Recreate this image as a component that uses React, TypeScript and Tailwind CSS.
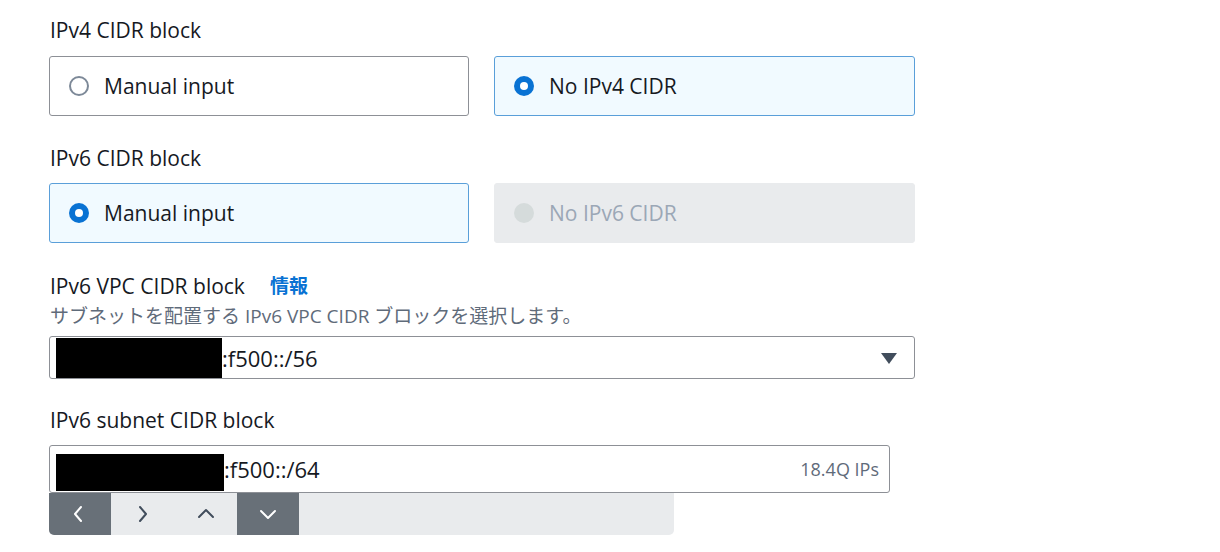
import React from 'react';

const font = { fontFamily: '"Open Sans", "Noto Sans CJK JP", sans-serif' };

const Radio = ({ state }: { state: 'off' | 'on' | 'disabled' }) => {
  if (state === 'on') {
    return (
      <span className="w-[20px] h-[20px] rounded-full bg-[#0972d3] flex items-center justify-center shrink-0">
        <span className="w-[8px] h-[8px] rounded-full bg-white"></span>
      </span>
    );
  }
  if (state === 'disabled') {
    return <span className="w-[20px] h-[20px] rounded-full bg-[#d5dbdb] shrink-0"></span>;
  }
  return <span className="w-[20px] h-[20px] rounded-full border-2 border-[#7d8998] bg-white shrink-0"></span>;
};

const Card = ({ label, state }: { label: string; state: 'off' | 'on' | 'disabled' }) => {
  const box =
    state === 'on'
      ? 'bg-[#f1faff] border-[#5a9fd9]'
      : state === 'disabled'
        ? 'bg-[#e9ebed] border-[#e9ebed]'
        : 'bg-white border-[#8d9096]';
  const text = state === 'disabled' ? 'text-[#9ba7b6]' : 'text-[#16191f]';
  return (
    <div className={`h-[60px] border rounded-[3px] flex items-center gap-[15px] pl-[19px] ${box}`}>
      <Radio state={state} />
      <span className={`text-[21px] leading-[24px] ${text}`}>{label}</span>
    </div>
  );
};

const Chevron = ({ dir, light }: { dir: 'left' | 'right' | 'up' | 'down'; light: boolean }) => {
  const paths: Record<string, string> = {
    left: 'M11 3 L5 10 L11 17',
    right: 'M7 3 L13 10 L7 17',
    up: 'M3 13 L10 6 L17 13',
    down: 'M3 7 L10 14 L17 7',
  };
  return (
    <svg width="20" height="20" viewBox="0 0 20 20" fill="none">
      <path d={paths[dir]} stroke={light ? '#ffffff' : '#414d5c'} strokeWidth="2" strokeLinecap="round" strokeLinejoin="round" />
    </svg>
  );
};

export default function App() {
  return (
    <div className="w-[1220px] h-[552px] bg-white pl-[49px] pt-[18px]" style={font}>
      <div className="text-[21px] leading-[24px] text-[#16191f] pl-[1px]">IPv4 CIDR block</div>
      <div className="mt-[14px] grid grid-cols-[420px_421px] gap-[25px]">
        <Card label="Manual input" state="off" />
        <Card label="No IPv4 CIDR" state="on" />
      </div>

      <div className="mt-[30px] text-[21px] leading-[24px] text-[#16191f] pl-[1px]">IPv6 CIDR block</div>
      <div className="mt-[13px] grid grid-cols-[420px_421px] gap-[25px]">
        <Card label="Manual input" state="on" />
        <Card label="No IPv6 CIDR" state="disabled" />
      </div>

      <div className="mt-[31px] flex items-center gap-[25px] text-[21px] leading-[24px] pl-[1px]">
        <span className="text-[#16191f]">IPv6 VPC CIDR block</span>
        <span className="text-[#0972d3] font-bold text-[19px]">情報</span>
      </div>
      <div className="mt-[8px] text-[19px] leading-[20px] text-[#5f6b7a] pl-[1px]">
        サブネットを配置する IPv6 VPC CIDR ブロックを選択します。
      </div>
      <div className="mt-[10px] w-[866px] h-[43px] border border-[#8d9096] rounded-[3px] flex items-center pl-[6px] pr-[16px]">
        <span className="w-[166px] h-[40px] bg-black shrink-0"></span>
        <span className="text-[22px] leading-[24px] text-[#16191f]">:f500::/56</span>
        <svg className="ml-auto" width="18" height="14" viewBox="0 0 18 14">
          <path d="M1 2 L17 2 L9 13 Z" fill="#414d5c" />
        </svg>
      </div>

      <div className="mt-[29px] text-[21px] leading-[24px] text-[#16191f] pl-[1px]">IPv6 subnet CIDR block</div>
      <div className="mt-[13px] w-[841px] h-[48px] border border-[#8d9096] rounded-[3px] flex items-center pl-[6px] pr-[10px]">
        <span className="w-[168px] h-[37px] bg-black shrink-0 mt-[6px]"></span>
        <span className="text-[22px] leading-[24px] text-[#16191f]">:f500::/64</span>
        <span className="ml-auto text-[18px] text-[#5f6b7a]">18.4Q IPs</span>
      </div>
      <div className="w-[625px] h-[42px] bg-[#e9ebed] rounded-b-[5px] flex overflow-hidden">
        <div className="w-[62px] h-full bg-[#687078] flex items-center justify-center">
          <Chevron dir="left" light />
        </div>
        <div className="w-[63px] h-full flex items-center justify-center">
          <Chevron dir="right" light={false} />
        </div>
        <div className="w-[63px] h-full flex items-center justify-center">
          <Chevron dir="up" light={false} />
        </div>
        <div className="w-[62px] h-full bg-[#687078] flex items-center justify-center">
          <Chevron dir="down" light />
        </div>
      </div>
    </div>
  );
}
